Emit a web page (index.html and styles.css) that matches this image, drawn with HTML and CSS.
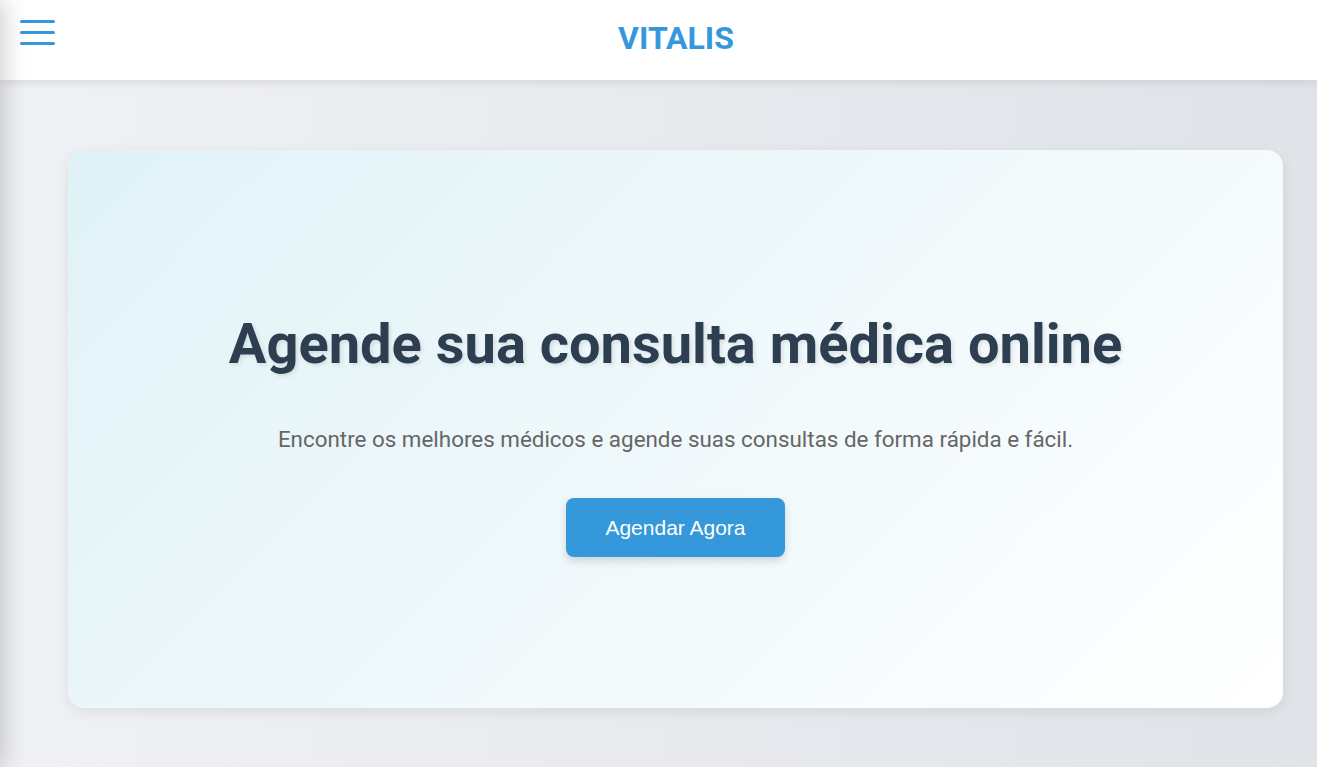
FILE: index.html
```html
<!DOCTYPE html>
<html lang="pt-BR">
<head>
<meta charset="utf-8">
<title>Vitalis</title>
<link rel="stylesheet" href="styles.css">
</head>
<body>
<aside class="sidebar"></aside>
<header class="header">
  <button class="menu-btn" aria-label="Menu">
    <span class="bar"></span><span class="bar"></span><span class="bar"></span>
  </button>
  <h1 class="logo">VITALIS</h1>
</header>
<main class="main">
  <section class="hero">
    <h2 class="hero-title">Agende sua consulta médica online</h2>
    <p class="hero-text">Encontre os melhores médicos e agende suas consultas de forma rápida e fácil.</p>
    <button class="hero-btn">Agendar Agora</button>
  </section>
</main>
</body>
</html>
```

FILE: styles.css
```css
* { box-sizing: border-box; }
html, body { margin: 0; padding: 0; }
body {
  font-family: Roboto, "Liberation Sans", Arial, sans-serif;
  min-height: 767px;
  background: linear-gradient(90deg, #f0f1f5 0%, #e0e3e8 100%);
  overflow: hidden;
}
.sidebar {
  position: fixed;
  top: 0;
  left: -250px;
  width: 250px;
  height: 100vh;
  background: #fff;
  box-shadow: 2px 0 24px rgba(0,0,0,0.22);
  z-index: 10;
}
.header {
  height: 80px;
  background: #fff;
  display: flex;
  align-items: flex-start;
  padding: 20px;
  box-shadow: 0 2px 10px rgba(0,0,0,0.1);
  position: relative;
  z-index: 5;
}
.menu-btn {
  width: 35px;
  padding: 0;
  margin: 0;
  border: 0;
  background: none;
  display: flex;
  flex-direction: column;
  gap: 8px;
  cursor: pointer;
}
.bar {
  display: block;
  width: 35px;
  height: 3px;
  background: #3498db;
  border-radius: 2px;
}
.logo {
  flex: 1;
  margin: 0;
  text-align: center;
  font-size: 32px;
  line-height: 37px;
  font-weight: 700;
  color: #3498db;
}
.main {
  padding: 70px 34px 0 68px;
}
.hero {
  border-radius: 16px;
  background: linear-gradient(135deg, #e0f2f7 0%, #ffffff 100%);
  box-shadow: 0 4px 14px rgba(0,0,0,0.08);
  padding: 161px 40px 151px;
  display: flex;
  flex-direction: column;
  align-items: center;
  text-align: center;
}
.hero-title {
  margin: 0 0 44px;
  font-size: 56px;
  line-height: 67px;
  font-weight: 700;
  color: #2c3e50;
  text-shadow: 2px 2px 4px rgba(0,0,0,0.1);
}
.hero-text {
  margin: 0 0 42px;
  font-size: 22.4px;
  line-height: 34px;
  color: #666;
}
.hero-btn {
  width: 219px;
  height: 59px;
  border: 0;
  border-radius: 8px;
  background: #3498db;
  color: #fff;
  font-family: "Liberation Sans", Arial, sans-serif;
  font-size: 21px;
  box-shadow: 0 4px 8px rgba(0,0,0,0.15);
  cursor: pointer;
}
```
